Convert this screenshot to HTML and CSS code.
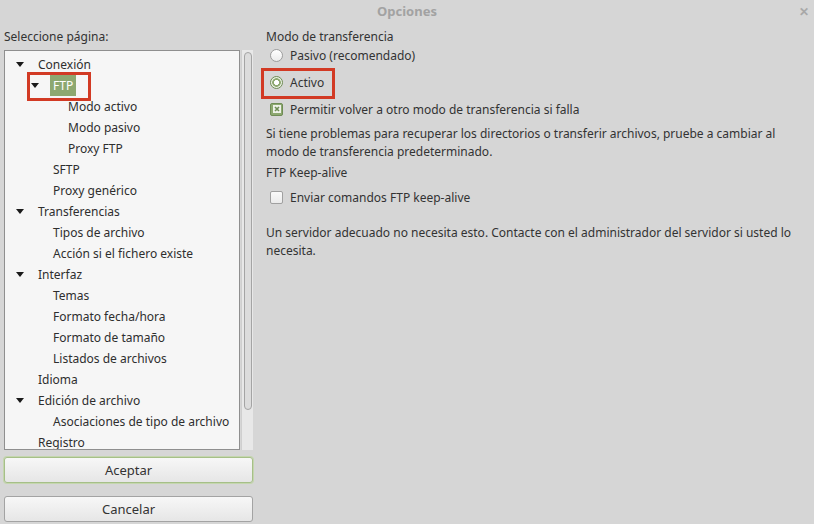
FILE: index.html
```html
<!DOCTYPE html>
<html lang="es">
<head>
<meta charset="utf-8">
<title>Opciones</title>
<link rel="stylesheet" href="styles.css">
</head>
<body>
<div class="window">
  <div class="titlebar">
    <span class="title">Opciones</span>
    <span class="close">✕</span>
  </div>
  <div class="main">
    <div class="left">
      <div class="label">Seleccione página:</div>
      <div class="tree-wrap">
        <div class="tree">
          <div class="row l0"><span class="arrow open"></span><span class="txt">Conexión</span></div>
          <div class="row l1 marked"><span class="arrow open"></span><span class="txt sel">FTP</span></div>
          <div class="row l2"><span class="arrow"></span><span class="txt">Modo activo</span></div>
          <div class="row l2"><span class="arrow"></span><span class="txt">Modo pasivo</span></div>
          <div class="row l2"><span class="arrow"></span><span class="txt">Proxy FTP</span></div>
          <div class="row l1"><span class="arrow"></span><span class="txt">SFTP</span></div>
          <div class="row l1"><span class="arrow"></span><span class="txt">Proxy genérico</span></div>
          <div class="row l0"><span class="arrow open"></span><span class="txt">Transferencias</span></div>
          <div class="row l1"><span class="arrow"></span><span class="txt">Tipos de archivo</span></div>
          <div class="row l1"><span class="arrow"></span><span class="txt">Acción si el fichero existe</span></div>
          <div class="row l0"><span class="arrow open"></span><span class="txt">Interfaz</span></div>
          <div class="row l1"><span class="arrow"></span><span class="txt">Temas</span></div>
          <div class="row l1"><span class="arrow"></span><span class="txt">Formato fecha/hora</span></div>
          <div class="row l1"><span class="arrow"></span><span class="txt">Formato de tamaño</span></div>
          <div class="row l1"><span class="arrow"></span><span class="txt">Listados de archivos</span></div>
          <div class="row l0"><span class="arrow"></span><span class="txt">Idioma</span></div>
          <div class="row l0"><span class="arrow open"></span><span class="txt">Edición de archivo</span></div>
          <div class="row l1"><span class="arrow"></span><span class="txt">Asociaciones de tipo de archivo</span></div>
          <div class="row l0"><span class="arrow"></span><span class="txt">Registro</span></div>
        </div>
        <div class="scrollbar"><div class="thumb"></div></div>
      </div>
      <div class="buttons">
        <button class="btn focus">Aceptar</button>
        <button class="btn">Cancelar</button>
      </div>
    </div>
    <div class="right">
      <div class="heading">Modo de transferencia</div>
      <div class="opt first"><span class="radio"></span><span>Pasivo (recomendado)</span></div>
      <div class="opt marked"><span class="radio on"></span><span>Activo</span></div>
      <div class="opt"><span class="check on"><svg viewBox="0 0 8 8" width="8" height="8"><rect x="0" y="0" width="8" height="8" fill="#eef2e8"/><path d="M2 2 L6 6 M6 2 L2 6" stroke="#6f8c55" stroke-width="1.6" fill="none"/></svg></span><span>Permitir volver a otro modo de transferencia si falla</span></div>
      <p class="para">Si tiene problemas para recuperar los directorios o transferir archivos, pruebe a cambiar al modo de transferencia predeterminado.</p>
      <div class="heading2">FTP Keep-alive</div>
      <div class="opt opt2"><span class="check"></span><span>Enviar comandos FTP keep-alive</span></div>
      <p class="para para2">Un servidor adecuado no necesita esto. Contacte con el administrador del servidor si usted lo necesita.</p>
    </div>
  </div>
</div>
</body>
</html>
```

FILE: styles.css
```css
*, *::before, *::after { box-sizing: border-box; }
html, body { margin: 0; padding: 0; }
body {
  width: 814px;
  height: 524px;
  overflow: hidden;
  background: #d6d6d6;
  font-family: "Noto Sans", "Open Sans", sans-serif;
  font-size: 12px;
  color: #333;
}
.window { display: flex; flex-direction: column; height: 524px; }
.titlebar {
  position: relative;
  height: 22px;
  display: flex;
  align-items: center;
  justify-content: center;
}
.title { font-weight: bold; color: #a2a2a2; font-size: 13px; }
.close {
  position: absolute;
  right: 5px;
  top: 3px;
  color: #a8a8a8;
  font-size: 12px;
  font-weight: bold;
}
.main {
  display: grid;
  grid-template-columns: 250px 1fr;
  column-gap: 12px;
  padding-left: 4px;
}
.left { display: flex; flex-direction: column; }
.label { margin-top: 6px; line-height: 18px; height: 18px; }
.tree-wrap {
  display: flex;
  height: 400px;
  margin-top: 4px;
  gap: 1px;
}
.tree {
  width: 236px;
  height: 400px;
  border: 1px solid #8f8f8f;
  background: #f6f6f6;
  padding-top: 3px;
  overflow: hidden;
}
.row {
  position: relative;
  display: flex;
  align-items: center;
  height: 21px;
  padding-left: 11px;
  white-space: nowrap;
  color: #2e2e2e;
}
.row.l1 { padding-left: 26px; }
.row.l2 { padding-left: 41px; }
.arrow { width: 22px; flex: none; display: flex; align-items: center; }
.arrow.open::before {
  content: "";
  display: block;
  width: 0; height: 0;
  border-left: 4.5px solid transparent;
  border-right: 4.5px solid transparent;
  border-top: 5px solid #1a1a1a;
}
.txt.sel {
  background: #8da870;
  color: #fff;
  padding: 0 3px;
  margin-left: -3px;
  line-height: 21px;
}
.row.marked::after {
  content: "";
  position: absolute;
  left: 22px;
  top: -3px;
  width: 64px;
  height: 29px;
  border: 3px solid #d23a24;
}
.scrollbar {
  width: 12px;
  height: 400px;
  background: #e8e8e8;
  border-left: 1px solid #cfcfcf;
  padding: 2px 1px 0 2px;
}
.thumb {
  height: 358px;
  background: #dcdcdc;
  border: 1px solid #a4a4a4;
  border-radius: 5px;
}
.buttons { display: flex; flex-direction: column; gap: 13px; margin-top: 7px; }
.btn {
  height: 26px;
  width: 249px;
  font-family: inherit;
  font-size: 13px;
  color: #333;
  border: 1px solid #a3a3a3;
  border-radius: 3px;
  background: linear-gradient(#f7f7f7, #e6e6e6);
}
.btn.focus { border-color: #a6bf88; box-shadow: 0 0 0 1px #c4d6ae; }
.right { display: flex; flex-direction: column; }
.heading { margin-top: 6px; line-height: 18px; }
.opt {
  position: relative;
  display: flex;
  align-items: center;
  height: 18px;
  padding-left: 4px;
  gap: 7px;
  white-space: nowrap;
  margin-top: 9px;
}
.opt.first { margin-top: 0; }
.radio {
  width: 13px; height: 13px; border-radius: 50%;
  border: 1px solid #9d9d9d;
  background: linear-gradient(#ffffff, #ececec);
  flex: none;
}
.radio.on {
  border: 1px solid #6f8c55;
  background: radial-gradient(circle, #ffffff 0 2.2px, #8da870 2.8px 4px, #e9efe2 4.6px);
}
.check {
  width: 13px; height: 13px; border-radius: 2px;
  border: 1px solid #a0a0a0;
  background: linear-gradient(#fafafa, #ebebeb);
  flex: none;
  display: flex; align-items: center; justify-content: center;
}
.check.on { background: #8da870; border-color: #6f8c55; }
.opt.marked::after {
  content: "";
  position: absolute;
  left: -5px;
  top: -5px;
  width: 74px;
  height: 31px;
  border: 3px solid #d23a24;
}
.para { margin: 7px 0 0; line-height: 18px; padding-right: 20px; }
.heading2 { margin-top: 3px; line-height: 18px; }
.opt2 { margin-top: 6px; }
.para2 { margin-top: 18px; }
```
